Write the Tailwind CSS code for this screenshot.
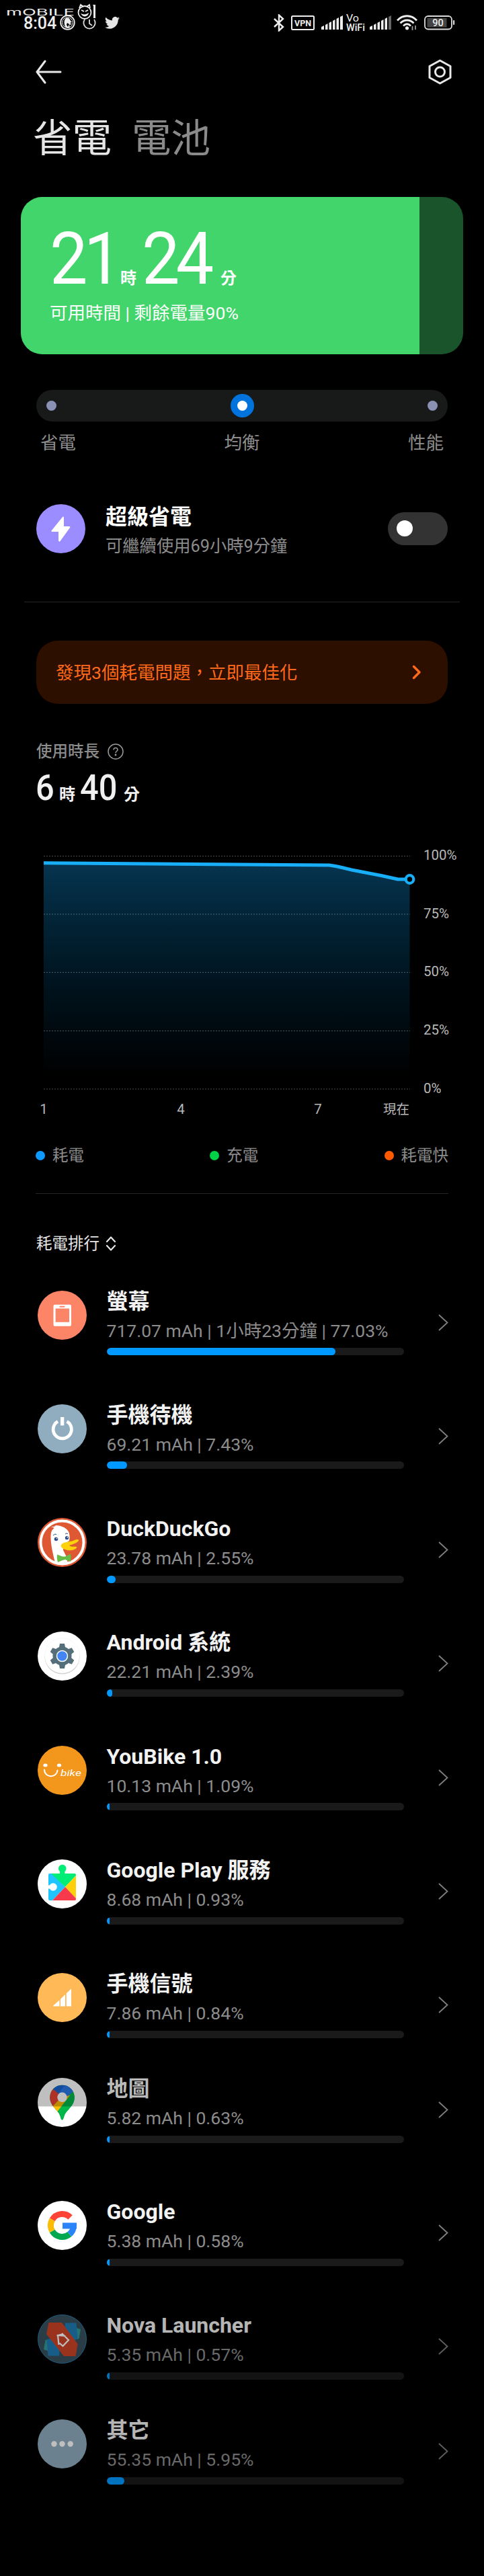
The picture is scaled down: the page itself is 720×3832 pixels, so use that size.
<!DOCTYPE html>
<html lang="zh-Hant">
<head>
  <meta charset="UTF-8">
  <meta name="viewport" content="width=device-width, initial-scale=1.0">
  <title>省電</title>
  <script src="https://cdn.jsdelivr.net/npm/@tailwindcss/browser@4"></script>
</head>
<body class="bg-black">
  <div class="w-[720px] h-[3832px] overflow-hidden bg-black text-white font-['Roboto','Noto_Sans_CJK_TC',sans-serif]">

    <!-- status bar -->
    <div class="relative h-[67px] flex items-center pl-[35px] pr-[43px]">
      <div class="w-[54px] pt-0.5 text-[25px] leading-none font-medium text-[#eee]">8:04</div>
      <svg class="w-[23px] h-[23px]" viewBox="0 0 23 23" fill="none">
        <circle cx="11.500" cy="11.500" r="10.300" stroke="#eee" stroke-width="1.800"/>
        <circle cx="11.500" cy="11.500" r="7.800" stroke="#eee" stroke-width="1"/>
        <path d="M8 18C6 13 6 9 8 6c3-3 7-1 8 3l2 2-3 1 3 2-4 1 1 4c-3 1-5 1-7-1z" fill="#eee"/>
        <path d="M11 12l3 2-2 4-2-3z" fill="#000"/>
      </svg>
      <svg class="w-5 h-5 ml-[11px]" viewBox="0 0 20 20" fill="none" stroke="#ddd" stroke-width="1.800">
        <path d="M3 5a8.600 8.600 0 1 0 14 0M10 5v6l4 3"/>
      </svg>
      <svg class="w-[22px] h-[20px] ml-[13px]" viewBox="0 0 24 20" fill="#e6e6e6">
        <path d="M24 2.400c-.9.400-1.800.700-2.800.8 1-.6 1.800-1.600 2.200-2.700-1 .6-2 1-3.100 1.200A4.900 4.900 0 0 0 11.900 6.100C7.800 5.900 4.200 3.900 1.700.9A4.900 4.900 0 0 0 3.200 7.500c-.8 0-1.600-.2-2.200-.6v.1c0 2.400 1.700 4.400 3.900 4.800-.7.200-1.500.200-2.200.1.600 2 2.400 3.400 4.600 3.400A9.900 9.900 0 0 1 0 17.300 14 14 0 0 0 21.500 4.900c1-.7 1.800-1.600 2.500-2.500z"/>
      </svg>

      <!-- right side indicators -->
      <svg class="w-4 h-[26px] ml-auto" viewBox="0 0 16 26" fill="none" stroke="#eee" stroke-width="2.400">
        <path d="M1 7l13 12-6 5.500V1.500L14 7 1 19"/>
      </svg>
      <svg class="w-[35px] h-[22px] ml-[10px]" viewBox="0 0 35 22">
        <rect x="1" y="1" width="33" height="20" rx="1.500" fill="none" stroke="#eee" stroke-width="2"/>
        <text x="17.500" y="15.600" text-anchor="middle" font-size="13" font-weight="700" fill="#eee" textLength="25" lengthAdjust="spacingAndGlyphs">VPN</text>
      </svg>
      <svg class="w-8 h-[21px] ml-[10px]" viewBox="0 0 32 21" fill="#eee">
        <path d="M0 21v-4l4-2v6zM6 21v-7l3.500-2v9zM11.500 21V11l3.500-2v12zM17 21V8l3.500-2v15zM22.500 21V5L26 3v18zM28 21V2l4-2v21z"/>
      </svg>
      <svg class="w-[29px] h-[26px] ml-[5px] overflow-visible" viewBox="0 0 29 26" fill="#eee">
        <text x="0" y="11" font-size="14.500" textLength="19" lengthAdjust="spacingAndGlyphs">Vo</text>
        <text x="0" y="25" font-size="14" font-weight="500" textLength="28" lengthAdjust="spacingAndGlyphs">WiFi</text>
      </svg>
      <svg class="w-8 h-[21px] ml-[6px]" viewBox="0 0 32 21" fill="#eee">
        <path d="M0 21v-4l4-2v6zM6 21v-7l3.500-2v9zM11.500 21V11l3.500-2v12zM17 21V8l3.500-2v15zM22.500 21V5L26 3v18z"/>
        <path d="M28 21V2l4-2v21z" fill="#666"/>
      </svg>
      <svg class="w-[31px] h-[23px] ml-2" viewBox="0 0 31 23" fill="none" stroke="#eee" stroke-width="2.800">
        <path d="M1 8.500C9-.5 22-.5 30 8.500M5.500 12.500c6-6 14-6 20 0M10 16.500c3.500-3.500 7.500-3.500 11 0"/>
        <circle cx="15.500" cy="19.800" r="2.600" fill="#eee" stroke="none"/>
        <path d="M23.500 17v6M28 16v6" stroke="#999" stroke-width="1.800"/>
      </svg>
      <svg class="w-[46px] h-[22px] ml-[10px]" viewBox="0 0 46 22">
        <rect x="1" y="1" width="40" height="19.500" rx="5" fill="none" stroke="#ddd" stroke-width="1.800"/>
        <rect x="4.500" y="4" width="29" height="13.500" fill="#444"/>
        <rect x="43" y="7" width="2.200" height="7" rx="1" fill="#ddd"/>
        <text x="20.500" y="15.800" text-anchor="middle" font-size="14.500" font-weight="500" fill="#eee">90</text>
      </svg>

      <!-- watermark -->
      <svg class="absolute left-[9px] top-[5px] w-[140px] h-[25px] overflow-visible" viewBox="0 0 140 25">
        <text x="0" y="18" font-size="13.500" fill="#eee" textLength="102" lengthAdjust="spacingAndGlyphs" font-family="Inter, sans-serif" font-weight="400">mOBILE</text>
        <circle cx="117" cy="13.500" r="9.500" fill="#000" stroke="#eee" stroke-width="1.800"/>
        <path d="M109 7l2-5 4 3M125 7l-1-5-4 3M112 10l4 2M122 10l-4 2" fill="none" stroke="#eee" stroke-width="1.800"/>
        <path d="M111 15c4 2 8 2 12-1-1 6-8 8-12 1z" fill="#eee"/>
        <path d="M129 2h4v20h-3V4z" fill="#eee"/>
      </svg>
    </div>

    <!-- toolbar -->
    <div class="h-20 flex items-center justify-between pl-[53px] pr-[48px]">
      <svg class="w-[39px] h-[36px]" viewBox="0 0 39 36" fill="none" stroke="#e8e8e8" stroke-width="3" stroke-linecap="round" stroke-linejoin="round">
        <path d="M14 2L2 18l12 16M2 18h35"/>
      </svg>
      <svg class="w-[35px] h-[38px]" viewBox="0 0 35 38" fill="none" stroke="#e8e8e8" stroke-width="3" stroke-linejoin="round">
        <path d="M17.500 2L33 10.500v17L17.500 36 2 27.500v-17z"/>
        <circle cx="17.500" cy="19" r="7"/>
      </svg>
    </div>

    <!-- tabs -->
    <div class="h-[117px] flex items-center gap-[30px] pl-[49px] pt-0.5 text-[58.500px] leading-none">
      <div class="text-[#e6e6e6]">省電</div>
      <div class="text-[#8a8a8a]">電池</div>
    </div>

    <!-- remaining time -->
    <div class="mt-[29px] mx-[31px] h-[234px] rounded-[32px] overflow-hidden bg-[#1a542b]">
      <div class="w-[593px] h-full bg-[#42d56b] pl-[43px] pt-[39px]">
        <div class="h-[107px] flex items-baseline leading-[107px]">
          <div class="w-[105px] text-[108px] tracking-[-6px] origin-left scale-x-93">21</div>
          <div class="w-[32px] text-[24px] font-bold">時</div>
          <div class="w-[117px] text-[108px] tracking-[-6px] origin-left scale-x-93">24</div>
          <div class="text-[24px] font-bold">分</div>
        </div>
        <div class="mt-[7px] text-[26.500px] leading-10">可用時間 | 剩餘電量90%</div>
      </div>
    </div>

    <!-- mode slider -->
    <div class="mt-[53px] mx-[54px] h-[47px] rounded-full bg-[#181a1a] flex items-center justify-between px-[15px]">
      <div class="size-[15px] rounded-full bg-[#8b91b5]"></div>
      <div class="size-[35px] rounded-full bg-[#0073dd] flex items-center justify-center">
        <div class="size-[15px] rounded-full bg-white"></div>
      </div>
      <div class="size-[15px] rounded-full bg-[#8b91b5]"></div>
    </div>
    <div class="mt-3 mx-[60px] flex justify-between text-[26.500px] leading-10 text-[#8c8c8c]">
      <div>省電</div>
      <div>均衡</div>
      <div>性能</div>
    </div>

    <!-- ultra battery saver -->
    <div class="mt-[70px] mx-[54px] h-[74px] flex items-center">
      <svg class="size-[73px]" viewBox="0 0 73 73">
        <circle cx="36.500" cy="36.500" r="36.500" fill="#9b8cff"/>
        <path d="M39.500 18.500L22.500 39.500q-.5 1.500 1 1.500h9.500v13.500q1 2 2.500.5L50 35q1-2-1-2h-8V19.500q-.5-1.500-1.500-1z" fill="#fff"/>
      </svg>
      <div class="ml-[30px] grow pt-[10px]">
        <div class="text-[32px] leading-[44px] font-bold">超級省電</div>
        <div class="text-[25.300px] leading-[44px] text-[#8c8c8c]">可繼續使用69小時9分鐘</div>
      </div>
      <div class="w-[89px] h-[49px] rounded-full bg-[#333] flex items-center pl-[13px]">
        <div class="size-6 rounded-full bg-white"></div>
      </div>
    </div>

    <div class="mt-[72px] mx-9 h-px bg-[#262626]"></div>

    <!-- issues banner -->
    <div class="mt-[57px] mx-[54px] h-[94px] rounded-[32px] bg-[#2d0f00] flex items-center justify-between pl-[29px] pr-[39px]">
      <div class="pt-0.5 text-[26.500px] leading-10 text-[#ff6a1a]">發現3個耗電問題，立即最佳化</div>
      <svg class="w-[14px] h-[22px]" viewBox="0 0 14 22" fill="none" stroke="#ff6a1a" stroke-width="3.500" stroke-linecap="round" stroke-linejoin="round">
        <path d="M2.500 2.500L11 11l-8.500 8.500"/>
      </svg>
    </div>

    <!-- usage time -->
    <div class="mt-[55px] pl-[54px] h-8 flex items-center text-[23.500px] leading-8 font-medium text-[#8c8c8c]">
      使用時長
      <svg class="ml-3 size-6" viewBox="0 0 24 24" fill="none" stroke="#999" stroke-width="1.500">
        <circle cx="12" cy="12" r="11"/>
        <path d="M9 9.500c0-4 6-4 6-.3 0 2.300-3 2.300-3 5"/>
        <circle cx="12" cy="17" r=".7" fill="#999"/>
      </svg>
    </div>
    <div class="pl-[53px] pt-[3px] h-[70px] flex items-baseline leading-[70px] text-[#f0f0f0]">
      <div class="w-[35px] text-[53px] font-medium origin-left scale-x-92">6</div>
      <div class="w-[31px] text-[24px] font-bold">時</div>
      <div class="w-[65px] text-[53px] font-medium origin-left scale-x-92">40</div>
      <div class="text-[24px] font-bold">分</div>
    </div>

    <!-- battery level chart -->
    <svg class="mt-[50px] w-[720px] h-[420px]" viewBox="0 1254 720 420">
      <defs>
        <linearGradient id="level" x1="0" y1="1283" x2="0" y2="1600" gradientUnits="userSpaceOnUse">
          <stop offset="0" stop-color="#063450"/>
          <stop offset=".25" stop-color="#022538"/>
          <stop offset=".6" stop-color="#00121c"/>
          <stop offset="1" stop-color="#000"/>
        </linearGradient>
      </defs>
      <path d="M65 1283.500L490 1287.500L523 1294L592 1308H609.500V1620H65z" fill="url(#level)"/>
      <path d="M65 1273.500H610M65 1360H610M65 1446.500H610M65 1533.500H610M65 1620H610" stroke="#fff" stroke-opacity=".3" stroke-width="1" stroke-dasharray="2 2"/>
      <path d="M65 1283.800L490 1287L502 1289L523 1294L567 1302.500L592 1308H604" fill="none" stroke="#18aef8" stroke-width="5" stroke-linejoin="round"/>
      <circle cx="609.500" cy="1308" r="5.800" fill="#000" stroke="#18aef8" stroke-width="4.200"/>
      <g font-size="20.500" fill="#b8b8b8">
        <text x="630" y="1279">100%</text>
        <text x="630" y="1365.500">75%</text>
        <text x="630" y="1452">50%</text>
        <text x="630" y="1539">25%</text>
        <text x="630" y="1625.500">0%</text>
        <text x="65" y="1657" text-anchor="middle">1</text>
        <text x="269" y="1657" text-anchor="middle">4</text>
        <text x="473" y="1657" text-anchor="middle">7</text>
        <text x="609" y="1657" text-anchor="end" font-size="19.500">現在</text>
      </g>
    </svg>
    <div class="mt-[29px] mx-[53px] h-8 flex items-center justify-between text-[23.500px] leading-8 text-[#8c8c8c]">
      <div class="flex items-center gap-[11px]"><div class="size-[14px] rounded-full bg-[#0d99ff]"></div>耗電</div>
      <div class="flex items-center gap-[11px]"><div class="size-[14px] rounded-full bg-[#00d048]"></div>充電</div>
      <div class="flex items-center gap-[11px]"><div class="size-[14px] rounded-full bg-[#ff5a00]"></div>耗電快</div>
    </div>

    <div class="mt-[40px] mx-[53px] h-px bg-[#262626]"></div>

    <!-- ranking -->
    <div class="mt-[58px] pl-[54px] h-8 flex items-center text-[23.500px] leading-8 text-[#e6e6e6]">
      耗電排行
      <svg class="ml-[9px] w-4 h-[22px]" viewBox="0 0 16 22" fill="none" stroke="#e6e6e6" stroke-width="2.200" stroke-linecap="round" stroke-linejoin="round">
        <path d="M2 8l6-6.500L14 8M2 14l6 6.500 6-6.500"/>
      </svg>
    </div>
    <div id="ranking" class="mt-[45.500px] pl-14 pr-[53px]"></div>
  </div>

  <!-- app icons -->
  <svg class="absolute top-0 left-0 size-0">
    <clipPath id="puzzle"><rect x="16" y="21" width="41" height="40" rx="2"/></clipPath>
    <clipPath id="pin"><path d="M36.500 62.500c-2 0-2-5-5-10C27 46 18.200 40 18.200 29a18.300 18.300 0 0 1 36.600 0c0 11-8.800 17-13.300 23.500-3 5-3 10-5 10z"/></clipPath>
    <clipPath id="disc"><circle cx="36.500" cy="36.500" r="36.500"/></clipPath>
    <symbol id="screen" viewBox="0 0 73 73">
      <circle cx="36.500" cy="36.500" r="36.500" fill="#fc8467"/>
      <path fill-rule="evenodd" d="M25.500 20.700h22.500a2 2 0 0 1 2 2v28a2 2 0 0 1-2 2H25.500a2 2 0 0 1-2-2v-28a2 2 0 0 1 2-2zM26.600 26.500v20.200H47V26.500zM32.600 22.700v2h7.800v-2z" fill="#fff"/>
    </symbol>
    <symbol id="standby" viewBox="0 0 73 73">
      <circle cx="36.500" cy="36.500" r="36.500" fill="#90adbf"/>
      <path d="M30 25.500A13.600 13.600 0 1 0 43.500 25.500" fill="none" stroke="#fff" stroke-width="4.800"/>
      <rect x="34" y="19" width="5.300" height="12.500" fill="#fff"/>
    </symbol>
    <symbol id="duck" viewBox="0 0 73 73">
      <circle cx="36.500" cy="36.500" r="36.500" fill="#de5833"/>
      <circle cx="36.500" cy="36.500" r="32" fill="none" stroke="#fff" stroke-width="4"/>
      <path d="M26 67C22 50 18 34 20 22c1-4 3-6 5-7l-5-2c5 0 5 0 7-2 6 0 15 3 18 8 3 4 3 10 2 15l-9 6v8l4 8 3 11q-10 3-19 0z" fill="#fff"/>
      <circle cx="27.500" cy="31.500" r="2.800" fill="#2d4f8e"/>
      <circle cx="43.500" cy="29.700" r="2.600" fill="#2d4f8e"/>
      <circle cx="28.500" cy="30.600" r=".8" fill="#fff"/>
      <circle cx="44.400" cy="28.900" r=".8" fill="#fff"/>
      <path d="M23 26q3-3 5-1.500M41 24q2-2 4-.5" fill="none" stroke="#2d4f8e" stroke-width="1"/>
      <path d="M37 38c5-3 12-2 18-5 4-2 7-1 6 1-3 4-9 5-14 7 4 3 8 1 11 2 1 4-8 6-14 5-9-2-12-7-7-10z" fill="#fdd20a"/>
      <path d="M29 54.500l8 3h4l8-4q1 6 0 11.500l-8-3-4 1-7 3q-2-6-1-11.500z" fill="#65bc46"/>
    </symbol>
    <symbol id="android" viewBox="0 0 73 73">
      <circle cx="36.500" cy="36.500" r="36.500" fill="#fff"/>
      <circle cx="36.500" cy="37.500" r="26" fill="#ccc"/>
      <circle cx="36.500" cy="36" r="26" fill="#fff" stroke="#eee" stroke-width=".5"/>
      <g fill="#546e7a">
        <circle cx="36.500" cy="36.500" r="14"/>
        <path id="tooth" d="M33 18h7l1.500 8h-10zM33 55h7l1.500-8h-10z"/>
        <use href="#tooth" transform="rotate(60 36.500 36.500)"/>
        <use href="#tooth" transform="rotate(120 36.500 36.500)"/>
      </g>
      <circle cx="36.500" cy="36.500" r="8" fill="#4285f4" stroke="#fff" stroke-width="1.500"/>
    </symbol>
    <symbol id="youbike" viewBox="0 0 73 73">
      <circle cx="36.500" cy="36.500" r="36.500" fill="#f2971b"/>
      <path d="M10 35.500c0 12 18 13.500 19.500 1" fill="none" stroke="#fff" stroke-width="2" stroke-linecap="round"/>
      <ellipse cx="11.500" cy="29" rx="3.200" ry="2.500" fill="#fff"/>
      <ellipse cx="32" cy="29" rx="3.200" ry="2.500" fill="#fff"/>
      <text x="34" y="45" font-size="13.500" font-style="italic" fill="#fff" textLength="31" lengthAdjust="spacingAndGlyphs">bike</text>
    </symbol>
    <symbol id="play" viewBox="0 0 73 73">
      <circle cx="36.500" cy="36.500" r="36.500" fill="#fff"/>
      <g clip-path="url(#puzzle)">
        <path d="M16 21h6l19 20-19 20h-6z" fill="#20c4ff"/>
        <path d="M20 21h37v3L41 41z" fill="#00ee76"/>
        <path d="M57 24v34L41 41z" fill="#ffd00a"/>
        <path d="M22 61l19-20 16 17v3z" fill="#f63a4c"/>
      </g>
      <path d="M33 22v-4a5.800 5.800 0 1 1 7.500 0v4z" fill="#00ee76"/>
      <circle cx="23" cy="41" r="5.800" fill="#fff"/>
      <rect x="15" y="38.500" width="5" height="5" fill="#fff"/>
    </symbol>
    <symbol id="signal" viewBox="0 0 73 73">
      <circle cx="36.500" cy="36.500" r="36.500" fill="#ffb957"/>
      <path d="M23 49.500v-.8l9.500-8.500v9.300zM34 49.500V38.700l7-6.700v17.500zM42.800 49.500V30.200l7.200-7v26.300z" fill="#fff"/>
    </symbol>
    <symbol id="maps" viewBox="0 0 73 73">
      <circle cx="36.500" cy="36.500" r="36.500" fill="#fff"/>
      <g clip-path="url(#pin)">
        <rect x="15" y="8" width="45" height="58" fill="#00b84a"/>
        <path d="M15 8h28l-6.500 21L22 17z" fill="#1a66d0"/>
        <path d="M43 8h18l-8 12-10 9-13-5z" fill="#2a7bea"/>
        <path d="M15 14l8 2.500 13.500 12L21 46l-6-5z" fill="#ea4335"/>
        <path d="M34 30L19 46l10 13 28-36z" fill="#fbbc04"/>
        <path d="M60 11L29 50.500l4 15h27z" fill="#00b84a"/>
        <path d="M43 8h18v3L50.500 22 38 27z" fill="#2a7bea"/>
      </g>
      <circle cx="36.500" cy="28.800" r="7.200" fill="#fff"/>
      <rect width="73" height="42.500" fill="#000" fill-opacity=".25" clip-path="url(#disc)"/>
    </symbol>
    <symbol id="google" viewBox="0 0 73 73">
      <circle cx="36.500" cy="36.500" r="36.500" fill="#fff"/>
      <g fill="none" stroke-width="9">
        <path d="M48.520 24.480A17 17 0 0 0 21.780 28" stroke="#ff4437"/>
        <path d="M21.780 28A17 17 0 0 0 21.780 45" stroke="#fbbc05"/>
        <path d="M21.780 45A17 17 0 0 0 47.430 49.520" stroke="#00a94f"/>
        <path d="M47.430 49.520A17 17 0 0 0 53.500 36.500" stroke="#2b83fa"/>
      </g>
      <path d="M37 32.500h21v9H37z" fill="#2b83fa"/>
    </symbol>
    <symbol id="nova" viewBox="0 0 73 73">
      <circle cx="36.500" cy="36.500" r="36" fill="#38505e" stroke="#2880ac" stroke-width="1"/>
      <path id="wing" d="M58 20l6 2-2.500 14L50 39z" fill="#2f9a9a"/>
      <path id="blade" d="M41 12.500h16.500l2 23.500-6 2.500L40 24z" fill="#1f7cb4"/>
      <use href="#wing" transform="rotate(180 36.500 37)"/>
      <use href="#blade" transform="rotate(180 36.500 37)"/>
      <path d="M16.500 12H36l23.700 32-3.200 18H39L13 29z" fill="#ce4428"/>
      <path d="M31.500 45l-1.500-14 11.500 1M28.500 31.500l9-2.500M36 28l10 10-8.500 9-5-4.500" fill="none" stroke="#fff" stroke-width="2.200"/>
    </symbol>
    <symbol id="other" viewBox="0 0 73 73">
      <circle cx="36.500" cy="36.500" r="36.500" fill="#90adbf"/>
      <g fill="#fff"><circle cx="24.500" cy="36.500" r="4.200"/><circle cx="36.500" cy="36.500" r="4.200"/><circle cx="48.700" cy="36.500" r="4.200"/></g>
    </symbol>
  </svg>

  <script>
    const items = [
      { icon: 'screen', name: '螢幕', info: '717.07 mAh | 1小時23分鐘 | 77.03%', percent: 77 },
      { icon: 'standby', name: '手機待機', info: '69.21 mAh | 7.43%', percent: 7 },
      { icon: 'duck', name: 'DuckDuckGo', info: '23.78 mAh | 2.55%', percent: 3 },
      { icon: 'android', name: 'Android 系統', info: '22.21 mAh | 2.39%', percent: 2 },
      { icon: 'youbike', name: 'YouBike 1.0', info: '10.13 mAh | 1.09%', percent: 1 },
      { icon: 'play', name: 'Google Play 服務', info: '8.68 mAh | 0.93%', percent: 1 },
      { icon: 'signal', name: '手機信號', info: '7.86 mAh | 0.84%', percent: 1, height: 'h-[156px]' },
      { icon: 'maps', name: '地圖', info: '5.82 mAh | 0.63%', percent: 1, height: 'h-[182.670px]', color: 'text-[#bababa]' },
      { icon: 'google', name: 'Google', info: '5.38 mAh | 0.58%', percent: 1 },
      { icon: 'nova', name: 'Nova Launcher', info: '5.35 mAh | 0.57%', percent: 1, height: 'h-[156px]', fade: 'opacity-75' },
      { icon: 'other', name: '其它', info: '55.35 mAh | 5.95%', percent: 6, fade: 'opacity-75' },
    ];

    document.getElementById('ranking').innerHTML = items.map((item) => `
      <div class="flex items-start ${item.height || 'h-[169.330px]'} ${item.fade || ''}">
        <svg class="size-[73px] mt-2 shrink-0"><use href="#${item.icon}"/></svg>
        <div class="ml-[29.500px] pt-0.5 w-[442px]">
          <div class="text-[32px] leading-[44px] font-bold whitespace-nowrap ${item.color || 'text-[#f2f2f2]'}">${item.name}</div>
          <div class="text-[26.500px] leading-[44px] whitespace-nowrap text-[#8c8c8c]">${item.info}</div>
          <div class="mt-[3.500px] h-[11px] rounded-full overflow-hidden bg-[#1a1a1a]">
            <div class="h-full rounded-full bg-[#0099ff]" style="width: ${item.percent}%"></div>
          </div>
        </div>
        <svg class="ml-auto mt-[43px] w-[15px] h-[25px]" viewBox="0 0 15 25" fill="none" stroke="#808080" stroke-width="1.800">
          <path d="M1 1l12.500 11.500L1 24"/>
        </svg>
      </div>`).join('');
  </script>
</body>
</html>
